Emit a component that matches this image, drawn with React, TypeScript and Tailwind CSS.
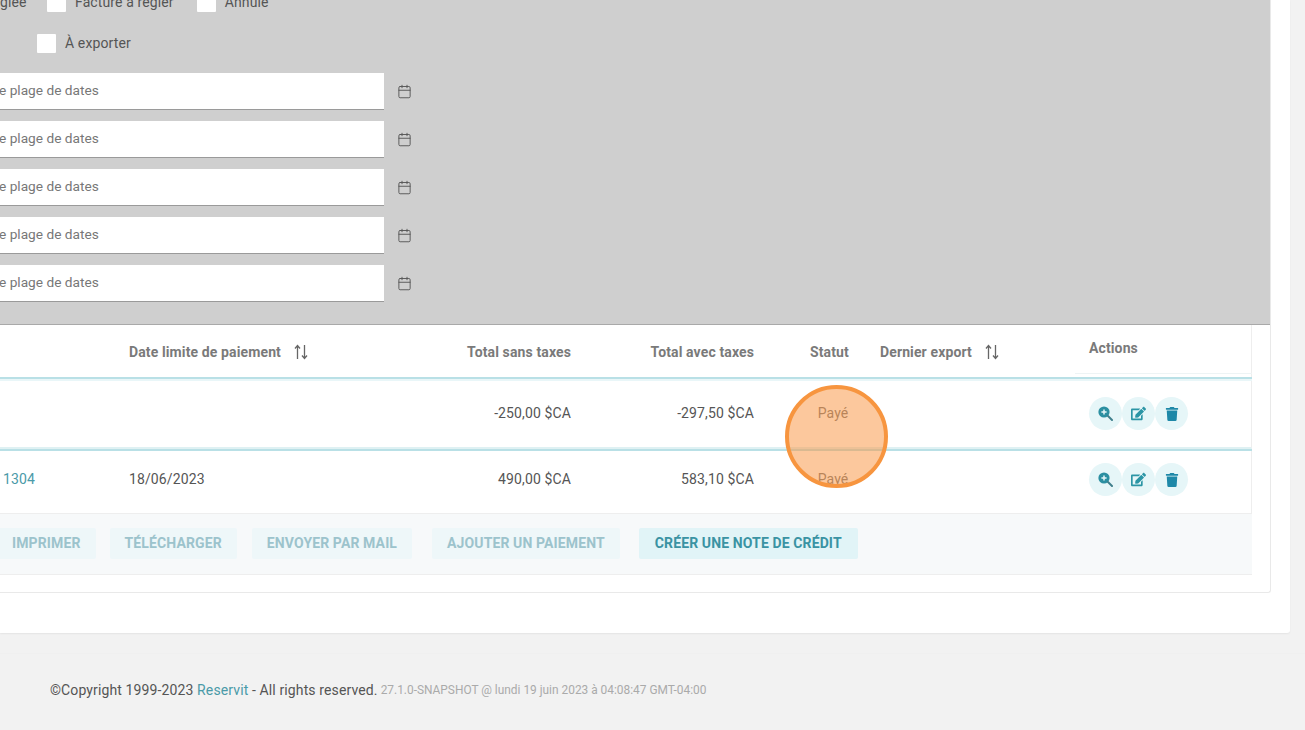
import React from "react";
import { FaEdit, FaTrash } from "react-icons/fa";
import { Calendar } from "lucide-react";

const ROW_GRID = "grid grid-cols-[129px_300px_142px_183px_126px_209px_163px] items-center";

const SortIcon = () => (
  <svg width="16" height="16" viewBox="0 0 16 16" fill="none" stroke="#666" strokeWidth="1.3" className="ml-[12px]">
    <path d="M4.5 15V1.5M2 4.5l2.5-3 2.5 3" />
    <path d="M11.5 1v13.5M9 11.5l2.5 3 2.5-3" />
  </svg>
);

const ZoomIcon = () => (
  <svg width="15" height="15" viewBox="0 0 15 15">
    <circle cx="6" cy="6" r="5.6" fill="#2b8fa1" />
    <path d="M10 10l4 4" stroke="#3f7f8c" strokeWidth="2" strokeLinecap="round" />
    <path d="M6 3.4v5.2M3.4 6h5.2" stroke="#e6f6f8" strokeWidth="1.5" />
  </svg>
);

const Check = ({ label, className }: { label: string; className?: string }) => (
  <div className={`flex items-center ${className ?? ""}`}>
    <span className="w-[19px] h-[19px] bg-white rounded-[1px] shrink-0" />
    <span className="ml-[9px] text-[#555]">{label}</span>
  </div>
);

const DateField = () => (
  <div className="flex items-center">
    <div className="w-[385px] h-[37px] bg-white border-b border-[#9a9a9a] flex items-center text-[#777] text-[13.7px] tracking-normal pb-[1px] -ml-[1px]">
      e plage de dates
    </div>
    <Calendar size={15} strokeWidth={1.5} color="#555" className="ml-[13px]" />
  </div>
);

const ActionButtons = () => (
  <div className="flex">
    <span className="w-[33px] h-[33px] rounded-full bg-[#e6f6f8] flex items-center justify-center">
      <ZoomIcon />
    </span>
    <span className="w-[33px] h-[33px] rounded-full bg-[#e6f6f8] flex items-center justify-center text-[#2b95a5]">
      <FaEdit size={15} />
    </span>
    <span className="w-[33px] h-[33px] rounded-full bg-[#e6f6f8] flex items-center justify-center text-[#1e88a8]">
      <FaTrash size={14} />
    </span>
  </div>
);

const ToolButton = ({ label, active, className }: { label: string; active?: boolean; className?: string }) => (
  <button
    className={`h-[31px] rounded-[2px] font-bold whitespace-nowrap ${
      active ? "px-[16px] bg-[#e1f4f7] text-[#3a93a3]" : "px-[15px] bg-[#eef7f9] text-[#9cc3cc]"
    } ${className ?? ""}`}
  >
    {label}
  </button>
);

export default function App() {
  return (
    <div className="relative w-[1305px] h-[730px] overflow-hidden bg-[#f2f2f2] text-[14px] tracking-[0.12px] font-['Roboto',sans-serif]">
      <div className="w-[1290px] h-[633px] bg-white shadow-[0_1px_2px_rgba(0,0,0,0.06)] rounded-br-[3px]">
        <div className="w-[1271px] h-[593px] border-r border-b border-[#e9e9e9] rounded-br-[3px]">
          {/* filtres */}
          <div className="w-[1270px] h-[325px] bg-[#cfcfcf] border-b border-[#a9a9a9] overflow-hidden">
            <div className="flex items-center h-[20px] -mt-[8px]">
              <span className="text-[#555] w-[47px]">glée</span>
              <Check label="Facture à régler" />
              <Check label="Annulé" className="ml-[23px]" />
            </div>
            <div className="flex items-center h-[20px] mt-[21px] ml-[37px]">
              <Check label="À exporter" />
            </div>
            <div className="flex flex-col gap-[11px] mt-[20px]">
              <DateField />
              <DateField />
              <DateField />
              <DateField />
              <DateField />
            </div>
          </div>

          {/* tableau */}
          <div className="w-[1252px]">
            <div className={`${ROW_GRID} h-[52px] border-r border-[#eeeeee] font-bold text-[#7a7a7a] pt-[2px]`}>
              <span />
              <span className="flex items-center">
                Date limite de paiement
                <SortIcon />
              </span>
              <span className="text-right">Total sans taxes</span>
              <span className="text-right">Total avec taxes</span>
              <span className="pl-[56px]">Statut</span>
              <span className="flex items-center">
                Dernier export
                <SortIcon />
              </span>
              <span className="h-[48px] -ml-[14px] pl-[14px] border-b border-[#eef4f5] flex items-center pb-[2px] -mt-[4px]">
                Actions
              </span>
            </div>
            <div className="h-[2px] bg-[#b9e0e6]" />
            <div className="h-[2px] bg-[#e9f6f8]" />
            <div className={`${ROW_GRID} h-[68px] border-r border-b-2 border-r-[#eeeeee] border-b-[#dff1f3] text-[#555] pb-[1px]`}>
              <span />
              <span />
              <span className="text-right">-250,00 $CA</span>
              <span className="text-right">-297,50 $CA</span>
              <span className="pl-[32px] text-center text-[#777]">Payé</span>
              <span />
              <ActionButtons />
            </div>
            <div className="h-[2px] bg-[#b9e0e6]" />
            <div className={`${ROW_GRID} h-[63px] border-r border-b border-[#eeeeee] text-[#555] pb-[5px]`}>
              <span className="pl-[3px] text-[#4a9aa8]">1304</span>
              <span>18/06/2023</span>
              <span className="text-right">490,00 $CA</span>
              <span className="text-right">583,10 $CA</span>
              <span className="pl-[32px] text-center text-[#777]">Payé</span>
              <span />
              <ActionButtons />
            </div>
            <div className="h-[61px] bg-[#f7f9fa] border-b border-[#eeeeee] flex items-center pb-[1px]">
              <ToolButton label="IMPRIMER" className="-ml-[3px]" />
              <ToolButton label="TÉLÉCHARGER" className="ml-[14px]" />
              <ToolButton label="ENVOYER PAR MAIL" className="ml-[15px]" />
              <ToolButton label="AJOUTER UN PAIEMENT" className="ml-[20px]" />
              <ToolButton label="CRÉER UNE NOTE DE CRÉDIT" active className="ml-[19px]" />
            </div>
          </div>
        </div>
      </div>

      <footer className="mt-[20px] h-[77px] border-t border-[#f0f0f0] flex items-center pl-[50px] pb-[4px] text-[#555]">
        <span>
          ©Copyright 1999-2023 <span className="text-[#4a9aa8]">Reservit</span> - All rights reserved.
        </span>
        <span className="ml-[3px] mt-[2px] text-[11.9px] tracking-normal text-[#aaaaaa]">27.1.0-SNAPSHOT @ lundi 19 juin 2023 à 04:08:47 GMT-04:00</span>
      </footer>

      {/* repère de capture */}
      <div className="absolute left-[785px] top-[385px] w-[103px] h-[103px] rounded-full border-[4px] border-[#f7953f] bg-[rgba(250,145,60,0.5)]" />
    </div>
  );
}
